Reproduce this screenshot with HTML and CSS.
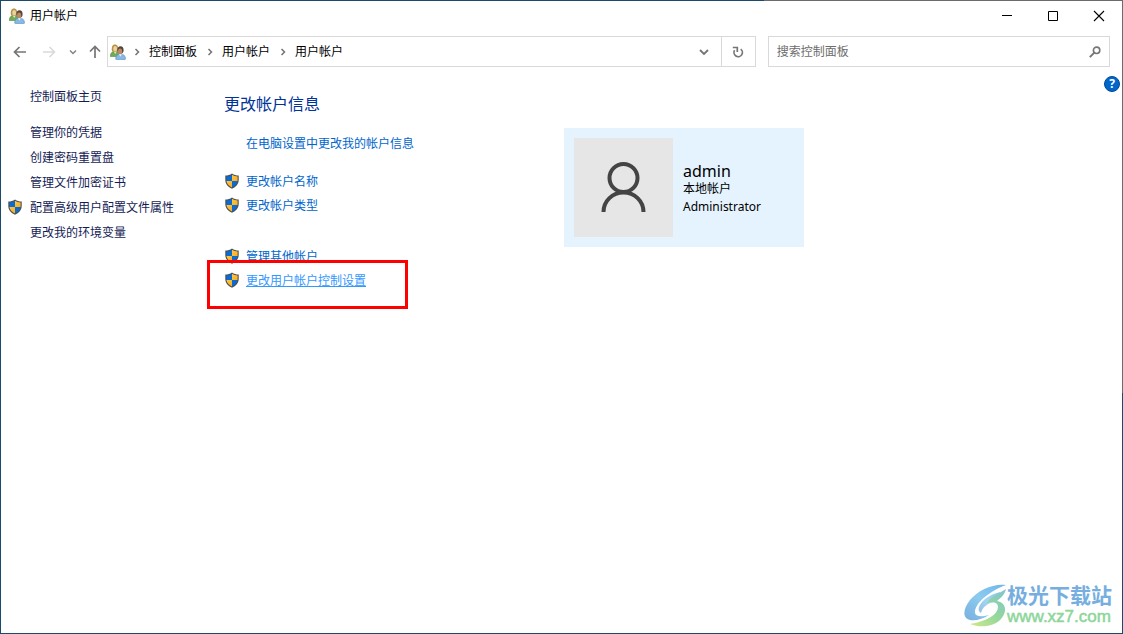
FILE: index.html
```html
<!DOCTYPE html>
<html lang="zh-CN">
<head>
<meta charset="utf-8">
<title>用户帐户</title>
<link rel="stylesheet" href="styles.css">
</head>
<body>
<svg class="defs" aria-hidden="true">
  <defs>
    <linearGradient id="gold" x1="0" y1="0" x2="1" y2="1"><stop offset="0" stop-color="#ffc64a"/><stop offset="1" stop-color="#f9ad1c"/></linearGradient>
    <linearGradient id="swoosh" x1="1" y1="0" x2="0" y2="1"><stop offset="0" stop-color="#6fb4ec"/><stop offset="0.5" stop-color="#8ccbee"/><stop offset="1" stop-color="#78aee0"/></linearGradient>
    <linearGradient id="leaf" x1="1" y1="0" x2="0" y2="1"><stop offset="0" stop-color="#7fc3d4"/><stop offset="0.5" stop-color="#93d89a"/><stop offset="1" stop-color="#d4e88a"/></linearGradient>
    <symbol id="shield" viewBox="0 0 16 16">
      <path d="M8 .4C6 1.9 3.800 2.400 1.300 2.500v4.400C1.300 11 4 13.900 8 15.700c4-1.800 6.700-4.700 6.700-8.800V2.500C12.200 2.400 10 1.900 8 .4z" fill="#4c4f52"/>
      <path d="M8 1.800C6.300 2.900 4.400 3.400 2.400 3.500V8H8z" fill="#0a6bd0"/>
      <path d="M8 1.800c1.700 1.100 3.600 1.600 5.600 1.700V8H8z" fill="url(#gold)"/>
      <path d="M2.400 8c.5 2.900 2.500 5 5.600 6.500V8z" fill="url(#gold)"/>
      <path d="M13.600 8c-.5 2.900-2.500 5-5.600 6.500V8z" fill="#0a6bd0"/>
    </symbol>
    <symbol id="users" viewBox="0 0 16 16">
      <path d="M.3 12.500C.3 9 2 7.600 5 7.600s4 1.400 4 4.900z" fill="#6fac55" stroke="#568c40" stroke-width=".6"/>
      <path d="M2 7.500C1.200 3 2.400.5 5 .5s3.700 2.500 3 7z" fill="#b09447"/>
      <ellipse cx="5.200" cy="4.800" rx="1.900" ry="2.800" fill="#f1d0a0"/>
      <path d="M4 8l1.200 2L6.500 8z" fill="#f0e6c8"/>
      <path d="M5.700 15.200c0-3.500 1.500-5 4.800-5s5 1.500 5 5c-2 .8-8 .8-9.800 0z" fill="#86b8e8" stroke="#588dbd" stroke-width=".6"/>
      <ellipse cx="10.500" cy="6" rx="3.100" ry="3.800" fill="#554438"/>
      <ellipse cx="10.100" cy="7.400" rx="2.100" ry="3" fill="#bd8864"/>
      <path d="M8.900 10.200l1.500 2.300 1.500-2.300z" fill="#eef5fc"/>
    </symbol>
    <symbol id="chev" viewBox="0 0 8 8"><path d="M2.500 1l3 3-3 3" fill="none" stroke="#747474" stroke-width="1.500"/></symbol>
  </defs>
</svg>
<div class="window">
  <header class="titlebar">
    <svg class="icon16"><use href="#users"/></svg>
    <h1 class="title">用户帐户</h1>
    <button class="caption" aria-label="最小化"><svg viewBox="0 0 12 12"><path d="M1 5.500h10" stroke="#000"/></svg></button>
    <button class="caption" aria-label="最大化"><svg viewBox="0 0 12 12"><path d="M1.500 1.500h9v9h-9z" fill="none" stroke="#000"/></svg></button>
    <button class="caption" aria-label="关闭"><svg viewBox="0 0 12 12"><path d="M1 1l10 10M11 1L1 11" stroke="#000" stroke-width="1.100"/></svg></button>
  </header>
  <nav class="toolbar" aria-label="导航">
    <div class="history">
      <button class="tool" aria-label="后退"><svg viewBox="0 0 14 14"><path d="M13 7H1.500M6.500 2l-5 5 5 5" fill="none" stroke="#757575" stroke-width="1.700"/></svg></button>
      <button class="tool" aria-label="前进" disabled><svg viewBox="0 0 14 14"><path d="M1 7h11.500M7.500 2l5 5-5 5" fill="none" stroke="#d9d9d9" stroke-width="1.500"/></svg></button>
      <button class="tool small" aria-label="最近位置"><svg viewBox="0 0 8 8"><path d="M1 2.500l3 3 3-3" fill="none" stroke="#858585" stroke-width="1.500"/></svg></button>
      <button class="tool" aria-label="上移"><svg viewBox="0 0 14 14"><path d="M7 13V1.500M2 6.500l5-5 5 5" fill="none" stroke="#757575" stroke-width="1.700"/></svg></button>
    </div>
    <div class="address">
      <svg class="icon16"><use href="#users"/></svg>
      <svg class="sep"><use href="#chev"/></svg><a class="crumb" href="#">控制面板</a>
      <svg class="sep"><use href="#chev"/></svg><a class="crumb" href="#">用户帐户</a>
      <svg class="sep"><use href="#chev"/></svg><a class="crumb" href="#">用户帐户</a>
      <button class="drop" aria-label="以前的位置"><svg viewBox="0 0 10 10"><path d="M1 3l4 4 4-4" fill="none" stroke="#757575" stroke-width="1.800"/></svg></button>
      <button class="refresh" aria-label="刷新"><svg viewBox="0 0 12 12"><path d="M2.600 4.300A4.200 4.200 0 1 0 8.700 3.100" fill="none" stroke="#757575" stroke-width="1.700"/><path d="M.8 1.500h4.500v4.600" fill="none" stroke="#757575" stroke-width="1.700"/></svg></button>
    </div>
    <form class="search">
      <input class="query" type="search" placeholder="搜索控制面板" aria-label="搜索控制面板">
      <button class="go" type="button" aria-label="搜索"><svg viewBox="0 0 12 12"><circle cx="7.600" cy="4.300" r="3.200" fill="none" stroke="#757575" stroke-width="1.600"/><path d="M5.300 6.700L.8 11.200" stroke="#757575" stroke-width="1.900"/></svg></button>
    </form>
  </nav>
  <div class="body">
    <aside class="side">
      <a class="home" href="#">控制面板主页</a>
      <ul class="tasks">
        <li><a href="#">管理你的凭据</a></li>
        <li><a href="#">创建密码重置盘</a></li>
        <li><a href="#">管理文件加密证书</a></li>
        <li><svg class="icon16"><use href="#shield"/></svg><a href="#">配置高级用户配置文件属性</a></li>
        <li><a href="#">更改我的环境变量</a></li>
      </ul>
    </aside>
    <main class="main">
      <h2 class="heading">更改帐户信息</h2>
      <div class="columns">
        <div class="actions">
          <ul class="group">
            <li><a href="#">在电脑设置中更改我的帐户信息</a></li>
          </ul>
          <ul class="group">
            <li><svg class="icon16"><use href="#shield"/></svg><a href="#">更改帐户名称</a></li>
            <li><svg class="icon16"><use href="#shield"/></svg><a href="#">更改帐户类型</a></li>
          </ul>
          <ul class="group last">
            <li><svg class="icon16"><use href="#shield"/></svg><a href="#">管理其他帐户</a></li>
            <li class="marked"><svg class="icon16"><use href="#shield"/></svg><a class="hover" href="#">更改用户帐户控制设置</a></li>
          </ul>
        </div>
        <section class="account">
          <svg class="avatar" viewBox="0 0 99 99"><path d="M0 0h99v99H0z" fill="#e6e6e6"/><g fill="none" stroke="#444" stroke-width="4"><circle cx="49.500" cy="40" r="14"/><path d="M29.500 74c0-11 9-19.500 20-19.500s20 8.500 20 19.500"/></g></svg>
          <div class="who">
            <p class="name">admin</p>
            <p>本地帐户</p>
            <p>Administrator</p>
          </div>
        </section>
      </div>
    </main>
    <button class="help" aria-label="帮助">?</button>
  </div>
  <div class="watermark">
    <svg class="swirl" viewBox="0 0 44 44">
      <path d="M43 1C31-1 15 6 7 16 0 25-1 34 7 36c6 1 13-1 19-5-7 2-13 2-14-2C11 21 24 8 43 1z" fill="url(#swoosh)"/>
      <path d="M37 8C29 10 19 15 16 23c-1 3 0 5 2 6 2-7 8-11 15-11 2-4 3-7 4-10z" fill="url(#swoosh)" opacity=".8"/>
      <path d="M43 5C37 9 27 13 24 19c7-2 11 0 11 4 0 7-10 14-28 17 10 4 24 3 31-5 6-7 6-16-4-18 4-3 8-7 9-12z" fill="url(#leaf)"/>
    </svg>
    <div class="mark"><p class="brand">极光下载站</p><p class="site">www.xz7.com</p></div>
  </div>
</div>
</body>
</html>
```

FILE: styles.css
```css
*, *::before { box-sizing: border-box; }

body {
  margin: 0;
  font: 12px/16px "Noto Sans", "Noto Sans CJK SC", sans-serif;
  color: #000;
}

h1, h2, p, ul { margin: 0; padding: 0; font-weight: normal; }
ul { list-style: none; }
a { color: inherit; text-decoration: none; }
svg { display: block; flex: none; }
button {
  display: flex;
  align-items: center;
  justify-content: center;
  padding: 0;
  border: 0;
  background: none;
  font: inherit;
}

.defs { position: absolute; width: 0; height: 0; }
.icon16 { width: 16px; height: 16px; }

.window {
  position: relative;
  display: flex;
  flex-direction: column;
  min-height: 100vh;
  border: 1px solid transparent;
  background:
    linear-gradient(#fff, #fff) padding-box,
    linear-gradient(to right, #1a4a6e 68%, #6b6b6b 68%) top / 100% 1px no-repeat border-box,
    linear-gradient(to bottom, #6b6b6b 62%, #1a4a6e 62%) right / 1px 100% no-repeat border-box,
    linear-gradient(#1a4a6e, #1a4a6e) border-box;
}

.titlebar {
  display: flex;
  align-items: center;
  height: 30px;
  padding-left: 8px;
}
.title { flex: 1; margin-left: 5px; font-size: 12px; }
.caption { width: 46px; height: 30px; }
.caption svg { width: 12px; height: 12px; }

.toolbar {
  display: flex;
  gap: 12px;
  padding: 5px 12px 0 0;
}
.history {
  display: flex;
  align-items: center;
  width: 94px;
  padding-left: 12px;
  gap: 15px;
}
.tool svg { width: 14px; height: 14px; }
.tool.small svg { width: 8px; height: 8px; }
.tool.small { margin: 0 -4px 0 -2px; }
.address, .search {
  display: flex;
  align-items: center;
  height: 31px;
  border: 1px solid #d9d9d9;
}
.address { flex: 66; padding-left: 2px; }
.search { flex: 34; padding-right: 8px; }
.sep { width: 8px; height: 8px; margin: 0 8px 0 7px; }
.crumb + .sep { margin-left: 8px; }
.crumb { margin-right: 1px; white-space: nowrap; }
.drop { width: 34px; margin-left: auto; }
.drop svg { width: 10px; height: 10px; }
.refresh { width: 34px; height: 29px; border-left: 1px solid #d9d9d9; }
.refresh svg { width: 12px; height: 12px; }
.query {
  flex: 1;
  min-width: 0;
  padding: 0 8px;
  border: 0;
  outline: 0;
  background: none;
  font: inherit;
}
.query::placeholder { color: #6d6d6d; opacity: 1; }
.go svg { width: 12px; height: 12px; }

.body { display: flex; flex: 1; padding-right: 2px; }
.side { width: 223px; padding: 22px 0 0 29px; color: #151c55; }
.home { display: block; margin-bottom: 15px; }
.tasks li { position: relative; height: 25px; line-height: 25px; }
.tasks .icon16 { position: absolute; left: -23px; top: 4px; }

.main { flex: 1; min-width: 0; padding-top: 26px; }
.heading { font-size: 16px; line-height: 22px; color: #003399; }
.columns { display: flex; align-items: flex-start; }
.actions { width: 340px; padding-top: 17px; color: #0066cc; }
.group { margin-bottom: 14px; }
.group li {
  position: relative;
  height: 24px;
  padding-left: 22px;
  line-height: 24px;
}
.group .icon16 { position: absolute; left: 0; top: 3px; }
.group.last { margin-top: 27px; }
.marked::before {
  content: "";
  position: absolute;
  z-index: 1;
  left: -17px;
  top: -9px;
  width: 201px;
  height: 49px;
  border: 3px solid #f00;
}
.hover { color: #3399ff; text-decoration: underline; }

.account {
  display: flex;
  align-items: center;
  gap: 10px;
  width: 240px;
  margin-top: 13px;
  padding: 10px;
  background: #e5f3ff;
}
.avatar { width: 99px; height: 99px; }
.who { padding-top: 2px; line-height: 18px; }
.name { font-size: 16px; }

.help {
  width: 16px;
  height: 16px;
  margin-top: 9px;
  border: 1px solid #004c94;
  border-radius: 50%;
  background: #0066cc;
  color: #fff;
  font-weight: bold;
  line-height: 14px;
}

.watermark {
  position: absolute;
  right: 10px;
  bottom: 4px;
  display: flex;
  align-items: center;
}
.swirl { width: 44px; height: 44px; }
.mark { padding-bottom: 4px; }
.brand { color: #76aee0; font-size: 21px; font-weight: bold; line-height: 24px; }
.site {
  padding-top: 2px;
  color: #8cd69a;
  font: 17px/16px "Liberation Sans", sans-serif;
  -webkit-text-stroke: 0.5px #8cd69a;
}
```
